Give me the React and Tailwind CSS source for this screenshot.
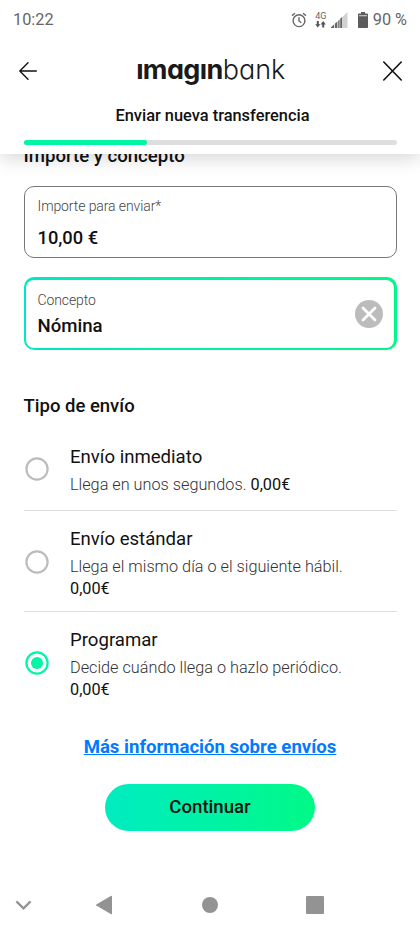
import React, { useState } from 'react';

const OPTIONS = [
  { id: 'inmediato', title: 'Envío inmediato', text: 'Llega en unos segundos.', price: '0,00€', size: 'h-[81px] pt-[15px]' },
  { id: 'estandar', title: 'Envío estándar', text: 'Llega el mismo día o el siguiente hábil.', price: '0,00€', size: 'h-[101px] pt-[16px]' },
  { id: 'programar', title: 'Programar', text: 'Decide cuándo llega o hazlo periódico.', price: '0,00€', size: 'h-[101px] pt-[16px]' },
];

// --- STATUS BAR ---
function StatusBar() {
  return (
    <div className="flex h-10 items-center pl-[13px] pr-[13px] text-base text-[#666]">
      <span className="text-[16.3px]">10:22</span>
      <svg className="ml-auto" width="16" height="16" viewBox="0 0 16 16" fill="none" stroke="#666" strokeWidth="1.4">
        <circle cx="8" cy="8.7" r="5.9" />
        <path d="M8 5.2v3.8l2.3 1.8M1 3.6 4 1.2M15 3.6l-3-2.4" />
      </svg>
      <div className="ml-[8px] flex w-3 flex-col items-center">
        <span className="text-[9px] leading-[9px]">4G</span>
        <svg width="11" height="7" viewBox="0 0 11 7" fill="#555">
          <path d="M1.8 0h2v3.2h1.6L2.8 6.6.2 3.2h1.6zM7.2 6.6h2V3.4h1.6L8.2 0 5.6 3.4h1.6z" />
        </svg>
      </div>
      <svg className="ml-[4px]" width="17" height="16" viewBox="0 0 17 16">
        <path d="M16.5 0v16H11V5.3z" fill="#d2d2d2" />
        <path d="M0 16v-.7l3.2-3V16zM4 16v-4.4l2.4-2.2V16zM7.2 16V8.7l1.4-1.3V16zM9.2 16V6.8L11 5.1V16z" fill="#666" />
      </svg>
      <svg className="ml-[10px]" width="10" height="16" viewBox="0 0 10 16" fill="#5c5c5c">
        <path d="M3 0h4v1.6h2.2q.8 0 .8.8v12.8q0 .8-.8.8H.8q-.8 0-.8-.8V2.4q0-.8.8-.8H3z" />
        <path d="M1 3h8v1.3H1z" fill="#bbb" />
      </svg>
      <span className="ml-[5px] text-[16.3px]">90 %</span>
    </div>
  );
}

// --- HEADER: logo, title and progress ---
function Header() {
  return (
    <header className="relative z-10 h-[154px] bg-white shadow-[0_2px_20px_rgba(0,0,0,0.2)]">
      <StatusBar />
      <div className="flex h-[62px] items-center justify-between pl-[19px] pr-[18.5px]">
        <button aria-label="Volver">
          <svg width="18" height="18" viewBox="0 0 18 18" fill="none" stroke="#111" strokeWidth="1.4" strokeLinecap="round" strokeLinejoin="round">
            <path d="M17.3 9H.8M9 .8.8 9 9 17.2" />
          </svg>
        </button>
        <h1 className="-mt-[3px] ml-[2px] flex font-['Inter',sans-serif] text-[27px] leading-none text-[#1a1a1a] [font-feature-settings:'cv11']">
          <span className="font-bold tracking-[-0.6px]">ımagın</span>
          <span className="font-light">bank</span>
        </h1>
        <button aria-label="Cerrar">
          <svg width="19" height="20" viewBox="0 0 19 20" fill="none" stroke="#111" strokeWidth="1.6" strokeLinecap="round">
            <path d="m.8 1 17.4 18M18.2 1 .8 19" />
          </svg>
        </button>
      </div>
      <p className="mt-[2px] pl-[5px] text-center text-[16.4px] leading-6 font-medium">Enviar nueva transferencia</p>
      <div className="mx-[23.5px] mt-[12px] h-[5px] rounded-full bg-[#dedede]">
        <div className="h-full w-[33%] rounded-full bg-[#00f5a5]" />
      </div>
    </header>
  );
}

function Radio({ checked }) {
  return (
    <svg width="24" height="24" viewBox="0 0 24 24" fill="none">
      <circle cx="12" cy="12" r="10.6" stroke={checked ? '#00f5a5' : '#bcbcbc'} strokeWidth="2.2" />
      {checked && <circle cx="12" cy="12" r="6" fill="#00f5a5" />}
    </svg>
  );
}

function App() {
  const [selected, setSelected] = useState('programar');

  return (
    <div className="flex h-[933px] w-[420px] flex-col overflow-hidden bg-white font-['Roboto',sans-serif] text-[#111]">
      <Header />

      <main className="flex-1 px-[23.5px]">
        <h2 className="-mt-[10px] h-[42px] text-[18.6px] leading-6 font-medium">Importe y concepto</h2>

        {/* Amount */}
        <div className="h-[72px] rounded-[10px] border border-[#777] px-[13px] pt-[9px]">
          <p className="text-[14px] leading-5 font-light tracking-[-0.1px] text-[#444]">Importe para enviar*</p>
          <p className="mt-[9.5px] text-[18.3px] leading-6 font-medium">10,00 €</p>
        </div>

        {/* Concept, focused */}
        <div className="mt-[19px] h-[73px] rounded-[10px] bg-linear-to-r from-[#00e8c0] to-[#00f986] p-[2.5px]">
          <div className="flex h-full items-center justify-between rounded-[8px] bg-white pr-[11.5px] pl-[11.5px]">
            <div className="mt-px">
              <p className="text-[14px] leading-5 font-light tracking-[-0.1px] text-[#444]">Concepto</p>
              <p className="mt-[4px] text-[18.6px] leading-6 font-medium">Nómina</p>
            </div>
            <button aria-label="Borrar">
              <svg width="28" height="28" viewBox="0 0 28 28">
                <circle cx="14" cy="14" r="14" fill="#bcbcbc" />
                <path d="m8 8 12 12M20 8 8 20" stroke="#fff" strokeWidth="2.8" strokeLinecap="round" />
              </svg>
            </button>
          </div>
        </div>

        <h2 className="mt-[44px] h-[36px] text-[18.5px] leading-6 font-medium">Tipo de envío</h2>

        <div className="divide-y divide-[#dedede]">
          {OPTIONS.map((o) => (
            <div key={o.id} className={`flex gap-[21px] pl-[1.5px] ${o.size}`} onClick={() => setSelected(o.id)}>
              <div className={o.id === 'inmediato' ? 'mt-[12px] shrink-0' : 'mt-[22.5px] shrink-0'}>
                <Radio checked={selected === o.id} />
              </div>
              <div>
                <h3 className="text-[18.6px] leading-6">{o.title}</h3>
                <p className="mt-[5px] w-[300px] text-[16.25px] leading-[21.5px] font-light text-[#333]">
                  {o.text} <span className="font-normal text-[#111]">{o.price}</span>
                </p>
              </div>
            </div>
          ))}
        </div>

        <a className="mt-[22px] block text-center text-[18.6px] leading-6 font-bold text-[#007aff] underline">
          Más información sobre envíos
        </a>
        <button className="mx-auto mt-[25px] block h-[47px] w-[210px] rounded-full bg-linear-to-r from-[#00ecc0] to-[#00f986] text-[18.6px] font-medium">
          Continuar
        </button>
      </main>

      {/* --- SYSTEM NAVIGATION --- */}
      <nav className="flex h-[56px] items-center pl-[15px] text-[#939393]">
        <svg width="17" height="10" viewBox="0 0 17 10" fill="none" stroke="currentColor" strokeWidth="2.2">
          <path d="m1.4 1.4 7.1 7 7.1-7" />
        </svg>
        <svg className="ml-[63px]" width="18" height="20" viewBox="0 0 18 20" fill="currentColor">
          <path d="M15.8.9Q17 .3 17 1.6v16.8q0 1.3-1.2.7L1.3 10.6q-.9-.6 0-1.2z" />
        </svg>
        <div className="ml-[89px] size-[16px] rounded-full bg-current" />
        <div className="ml-[88px] size-[18px] rounded-[1px] bg-current" />
      </nav>
    </div>
  );
}

export default App;
